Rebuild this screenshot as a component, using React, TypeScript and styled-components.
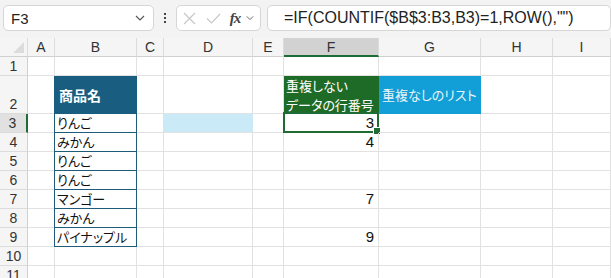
import React from "react";
import styled, { createGlobalStyle, css } from "styled-components";

const Global = createGlobalStyle`
  html, body { margin: 0; padding: 0; background: #ffffff; }
  body { font-family: "Liberation Sans", "Noto Sans CJK JP", sans-serif; overflow: hidden; }
  * { box-sizing: border-box; }
`;

const Page = styled.div`
  width: 611px;
  height: 278px;
  overflow: hidden;
  background: #ffffff;
`;

const FormulaBar = styled.div`
  height: 38px;
  background: #f3f3f3;
  display: flex;
  align-items: flex-start;
  padding: 5px 0 0 3px;
`;

const Box = styled.div<{ $w?: number }>`
  height: 26px;
  background: #ffffff;
  border: 1px solid #d6d6d6;
  border-radius: 5px;
  display: flex;
  align-items: center;
  ${(p) => (p.$w ? css`width: ${p.$w}px;` : css`flex: 1;`)}
`;

const NameText = styled.span`
  flex: 1;
  padding-left: 7px;
  font-size: 15px;
  color: #222;
`;

const Chevron = styled.svg<{ $small?: boolean }>`
  width: ${(p) => (p.$small ? 8 : 10)}px;
  height: 6px;
  margin-right: ${(p) => (p.$small ? 4 : 8)}px;
`;

const Dots = styled.div`
  width: 22px;
  display: flex;
  flex-direction: column;
  align-items: center;
  justify-content: center;
  gap: 2px;
  height: 26px;
`;

const Dot = styled.span`
  width: 2px;
  height: 2px;
  background: #444;
`;

const Spacer = styled.div`
  width: 6px;
`;

const IconSlot = styled.div<{ $w: number }>`
  width: ${(p) => p.$w}px;
  display: flex;
  align-items: center;
  justify-content: center;
`;

const Fx = styled.span`
  font-family: "Liberation Serif", serif;
  font-style: italic;
  font-weight: bold;
  font-size: 15px;
  color: #444;
  letter-spacing: -1px;
`;

const FormulaText = styled.span`
  padding-left: 16px;
  font-size: 16px;
  color: #222;
  white-space: nowrap;
`;

const Sheet = styled.div`
  display: grid;
  grid-template-columns: 28px 27px 82px 27px 89px 31px 95px 102px 72px 1fr;
  grid-template-rows: 19px 19px 38px repeat(9, 19px);
`;

const Corner = styled.div`
  background: #f5f5f5;
  border-right: 1px solid #dcdcdc;
  border-bottom: 1px solid #d0d0d0;
  position: relative;
  &::after {
    content: "";
    position: absolute;
    right: 3px;
    bottom: 3px;
    width: 0;
    height: 0;
    border-left: 11px solid transparent;
    border-bottom: 11px solid #dcdcdc;
  }
`;

const ColHead = styled.div<{ $sel?: boolean }>`
  background: ${(p) => (p.$sel ? "#d2d2d2" : "#f5f5f5")};
  border-right: 1px solid #dcdcdc;
  border-bottom: ${(p) => (p.$sel ? "2px solid #1e6b34" : "1px solid #d0d0d0")};
  font-size: 14px;
  color: #333;
  display: flex;
  align-items: center;
  justify-content: center;
  padding-top: ${(p) => (p.$sel ? "1px" : "0")};
`;

const RowHead = styled.div<{ $sel?: boolean }>`
  background: ${(p) => (p.$sel ? "#e1e1e1" : "#f5f5f5")};
  border-bottom: 1px solid #dcdcdc;
  border-right: ${(p) => (p.$sel ? "2px solid #1e6b34" : "1px solid #d0d0d0")};
  font-size: 14px;
  color: #333;
  display: flex;
  align-items: flex-end;
  justify-content: center;
  padding-bottom: 1px;
  padding-right: ${(p) => (p.$sel ? "1px" : "0")};
`;

type Variant = "plain" | "bhead" | "blist" | "dfill" | "fhead" | "ghead" | "num";

const Cell = styled.div<{ $v?: Variant }>`
  border-right: 1px solid #e1e1e1;
  border-bottom: 1px solid #e1e1e1;
  font-family: "Noto Sans CJK JP", "Liberation Sans", sans-serif;
  font-feature-settings: "palt";
  font-size: 13px;
  color: #111;
  display: flex;
  align-items: flex-end;
  white-space: nowrap;
  position: relative;
  line-height: 18px;
  ${(p) =>
    p.$v === "bhead" &&
    css`
      background: #195d80;
      border-right-color: #195d80;
      border-bottom-color: #195d80;
      box-shadow: -1px 0 0 #195d80;
      color: #ffffff;
      font-weight: bold;
      font-size: 14px;
      align-items: center;
      padding-left: 4px;
    `}
  ${(p) =>
    p.$v === "blist" &&
    css`
      border-right-color: #1f5b7a;
      border-bottom-color: #1f5b7a;
      box-shadow: -1px 0 0 #1f5b7a;
      padding-left: 2px;
    `}
  ${(p) =>
    p.$v === "dfill" &&
    css`
      background: #cbeaf8;
      border-right-color: #cbeaf8;
    `}
  ${(p) =>
    p.$v === "fhead" &&
    css`
      background: #1e6b28;
      border-right-color: #1e6b28;
      border-bottom-color: #1e6b28;
      color: #ffffff;
      flex-direction: column;
      align-items: flex-start;
      justify-content: center;
      padding-left: 2px;
      line-height: 19px;
    `}
  ${(p) =>
    p.$v === "ghead" &&
    css`
      background: #129ed6;
      border-right-color: #129ed6;
      border-bottom-color: #129ed6;
      color: #e8f4fa;
      align-items: center;
      padding-left: 3px;
    `}
  ${(p) =>
    p.$v === "num" &&
    css`
      font-family: "Liberation Sans", sans-serif;
      justify-content: flex-end;
      padding-right: 4px;
      font-size: 15px;
    `}
`;

const SelectBox = styled.div`
  position: absolute;
  left: -1px;
  top: -2px;
  right: -1px;
  bottom: -1px;
  border: 2px solid #1e6b34;
  pointer-events: none;
  &::after {
    content: "";
    position: absolute;
    right: -4px;
    bottom: -4px;
    width: 6px;
    height: 6px;
    background: #1e6b34;
    border: 1px solid #ffffff;
  }
`;

const cols = ["A", "B", "C", "D", "E", "F", "G", "H", "I"];

const fruits: Record<number, string> = {
  3: "りんご",
  4: "みかん",
  5: "りんご",
  6: "りんご",
  7: "マンゴー",
  8: "みかん",
  9: "パイナップル",
};

const nums: Record<number, string> = { 3: "3", 4: "4", 7: "7", 9: "9" };

export default function App() {
  const rows = Array.from({ length: 11 }, (_, i) => i + 1);
  return (
    <Page>
      <Global />
      <FormulaBar>
        <Box $w={151}>
          <NameText>F3</NameText>
          <Chevron viewBox="0 0 10 6">
            <path d="M1 1 L5 5 L9 1" fill="none" stroke="#555" strokeWidth="1.1" />
          </Chevron>
        </Box>
        <Dots>
          <Dot />
          <Dot />
          <Dot />
        </Dots>
        <Box $w={85}>
          <IconSlot $w={25}>
            <svg width="13" height="13" viewBox="0 0 13 13">
              <path d="M1 1 L12 12 M12 1 L1 12" stroke="#c8c8c8" strokeWidth="1.2" />
            </svg>
          </IconSlot>
          <IconSlot $w={22}>
            <svg width="15" height="11" viewBox="0 0 15 11">
              <path d="M1 5.5 L5.5 10 L14 1" fill="none" stroke="#c8c8c8" strokeWidth="1.2" />
            </svg>
          </IconSlot>
          <IconSlot $w={22}>
            <Fx>fx</Fx>
          </IconSlot>
          <Chevron $small viewBox="0 0 10 6">
            <path d="M1 1 L5 5 L9 1" fill="none" stroke="#555" strokeWidth="1.1" />
          </Chevron>
        </Box>
        <Spacer />
        <Box>
          <FormulaText>=IF(COUNTIF($B$3:B3,B3)=1,ROW(),"")</FormulaText>
        </Box>
      </FormulaBar>
      <Sheet>
        <Corner />
        {cols.map((c) => (
          <ColHead key={c} $sel={c === "F"}>
            {c}
          </ColHead>
        ))}
        {rows.map((r) => (
          <React.Fragment key={r}>
            <RowHead $sel={r === 3}>{r}</RowHead>
            {cols.map((c) => {
              const k = `${c}${r}`;
              if (c === "B" && r === 2) return <Cell key={k} $v="bhead">商品名</Cell>;
              if (c === "B" && fruits[r]) return <Cell key={k} $v="blist">{fruits[r]}</Cell>;
              if (c === "D" && r === 3) return <Cell key={k} $v="dfill" />;
              if (c === "F" && r === 2)
                return (
                  <Cell key={k} $v="fhead">
                    <span>重複しない</span>
                    <span>データの行番号</span>
                  </Cell>
                );
              if (c === "G" && r === 2) return <Cell key={k} $v="ghead">重複なしのリスト</Cell>;
              if (c === "F" && r === 3)
                return (
                  <Cell key={k} $v="num">
                    3
                    <SelectBox />
                  </Cell>
                );
              if (c === "F" && nums[r]) return <Cell key={k} $v="num">{nums[r]}</Cell>;
              return <Cell key={k} />;
            })}
          </React.Fragment>
        ))}
      </Sheet>
    </Page>
  );
}
